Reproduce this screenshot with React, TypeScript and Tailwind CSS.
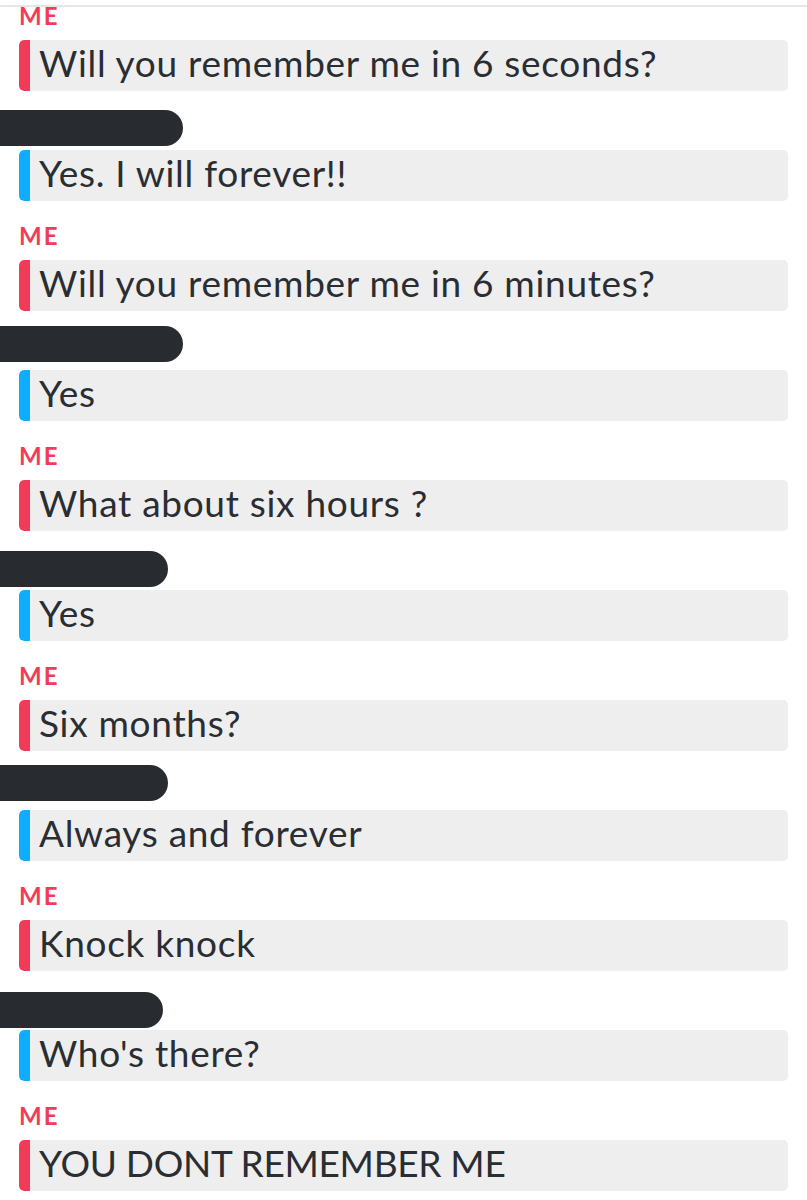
import React from 'react';

type Msg = {
  me: boolean;
  text: string;
  pillW?: number;
  pillB?: number;
};

const messages: Msg[] = [
  { me: true, text: 'Will you remember me in 6 seconds?' },
  { me: false, text: 'Yes. I will forever!!', pillW: 183, pillB: 4 },
  { me: true, text: 'Will you remember me in 6 minutes?' },
  { me: false, text: 'Yes', pillW: 183, pillB: 8 },
  { me: true, text: 'What about six hours ?' },
  { me: false, text: 'Yes', pillW: 168, pillB: 3 },
  { me: true, text: 'Six months?' },
  { me: false, text: 'Always and forever', pillW: 168, pillB: 9 },
  { me: true, text: 'Knock knock' },
  { me: false, text: "Who's there?", pillW: 163, pillB: 2 },
  { me: true, text: 'YOU DONT REMEMBER ME' },
];

const font = { fontFamily: 'Lato, "Open Sans", sans-serif' };

const Message: React.FC<{ m: Msg }> = ({ m }) => {
  const caps = m.text === m.text.toUpperCase();
  return (
    <div className="flex flex-col">
      {m.me ? (
        <div className="h-[59px] flex items-end pb-[12px]">
          <span className="text-[24px] leading-none font-bold tracking-[2px] text-[#f23c57]">ME</span>
        </div>
      ) : (
        <div className="h-[59px] flex items-end -ml-[19px]">
          <div
            className="h-[36px] rounded-full bg-[#282c31] -ml-[20px]"
            style={{ width: (m.pillW ?? 0) + 20, marginBottom: m.pillB }}
          />
        </div>
      )}
      <div className="h-[51px] flex rounded-[5px] bg-[#eeeeee] overflow-hidden">
        <div className={m.me ? 'w-[11px] bg-[#f23c57] rounded-l-[5px]' : 'w-[11px] bg-[#0eadff] rounded-l-[5px]'} />
        <div
          className={
            caps
              ? 'pl-[9px] pt-[4px] text-[37px] leading-none tracking-[-0.3px] text-[#2a2d32] whitespace-nowrap'
              : 'pl-[9px] pt-[4px] text-[37px] leading-none tracking-[0.7px] text-[#2a2d32] whitespace-nowrap'
          }
        >
          {m.text}
        </div>
      </div>
    </div>
  );
};

export default function App() {
  return (
    <div className="relative w-[807px] h-[1200px] overflow-hidden bg-white" style={font}>
      <div className="absolute top-[5px] left-0 right-0 h-[2px] bg-[#e6e6e6]" />
      <div className="flex flex-col px-[19px] -mt-[19px]">
        {messages.map((m, i) => (
          <Message key={i} m={m} />
        ))}
      </div>
    </div>
  );
}
